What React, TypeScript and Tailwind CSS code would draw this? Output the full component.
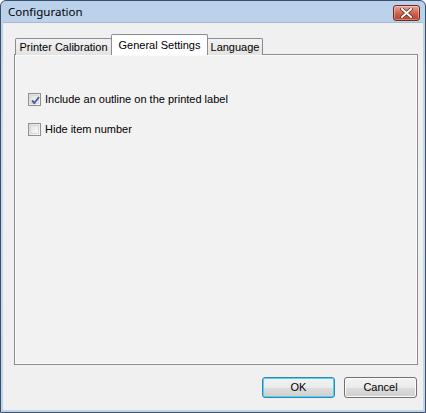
import React from "react";

function CheckBox({ checked }: { checked?: boolean }) {
  return (
    <span className="relative flex h-[13px] w-[13px] shrink-0 items-center justify-center border border-[#8f8f8f] bg-gradient-to-br from-[#dcdcdc] to-[#fbfbfb]">
      <span className="h-[9px] w-[9px] border border-[#d6d6d6] bg-gradient-to-br from-[#e4e4e4] to-[#fafafa]" />
      {checked && (
        <svg className="absolute left-[1px] top-[1px]" width="11" height="11" viewBox="0 0 11 11">
          <path d="M2 5.5 L4.3 8 L9 2" fill="none" stroke="#4a5f97" strokeWidth="1.9" />
        </svg>
      )}
    </span>
  );
}

function Button({ label, focused }: { label: string; focused?: boolean }) {
  return (
    <button
      type="button"
      className={
        "h-[21px] w-[73px] rounded-[3px] border text-[11px] text-black " +
        (focused
          ? "border-[#3c7fb1] shadow-[inset_0_0_0_1px_#48d8fb]"
          : "border-[#707070] shadow-[inset_0_0_0_1px_#fcfcfc]")
      }
      style={{ background: "linear-gradient(#f2f2f2 0%, #ebebeb 50%, #dddddd 51%, #cfcfcf 100%)" }}
    >
      {label}
    </button>
  );
}

export default function App() {
  const tabs = ["Printer Calibration", "General Settings", "Language"];
  const active = 1;

  return (
    <div
      className="flex h-[413px] w-[426px] flex-col overflow-hidden rounded-t-[6px] border border-[#3d4e68] bg-gradient-to-b from-[#b9d1ea] via-[#c9dbef] to-[#bcd4ec] text-[11px]"
      style={{ fontFamily: '"Liberation Sans", Arial, sans-serif' }}
    >
      {/* Title bar */}
      <div className="flex h-[21px] shrink-0 items-center justify-between pl-[7px] pr-[5px]">
        <span className="text-[11.5px] text-black" style={{ fontFamily: '"Noto Sans", sans-serif' }}>
          Configuration
        </span>
        <span className="mt-[2px] flex h-[16px] w-[27px] items-center justify-center rounded-[3px] border border-[#6b2a22] bg-gradient-to-b from-[#e9a898] via-[#d0654f] to-[#b8402c] shadow-[inset_0_0_0_1px_rgba(255,255,255,0.35)]">
          <svg width="13" height="10" viewBox="0 0 13 10">
            <path d="M2 1 L11 9 M11 1 L2 9" stroke="#5a2a22" strokeWidth="3.4" strokeLinecap="square" />
            <path d="M2 1 L11 9 M11 1 L2 9" stroke="#ffffff" strokeWidth="2" strokeLinecap="square" />
          </svg>
        </span>
      </div>

      {/* Client area */}
      <div className="relative mx-[2px] mb-[2px] flex flex-1 flex-col border-t border-[#a9b8ca] bg-[#f0f0f0] pl-[11px] pt-[11px]">
        {/* Tab strip */}
        <div className="relative z-10 -mb-px flex h-[21px] items-end pl-[1px]">
          {tabs.map((t, i) =>
            i === active ? (
              <div
                key={t}
                className="relative z-10 -mx-[1px] flex h-[21px] w-[97px] items-start justify-center rounded-t-[2px] border border-b-0 border-[#898c95] bg-white pt-[2px] text-black"
              >
                {t}
              </div>
            ) : (
              <div
                key={t}
                className={
                  "flex h-[17px] items-center justify-center rounded-t-[2px] border border-b-0 border-[#898c95] bg-gradient-to-b from-[#f2f2f2] to-[#e3e3e3] text-black " +
                  (i === 0 ? "w-[97px]" : "w-[56px]")
                }
              >
                {t}
              </div>
            )
          )}
        </div>

        {/* Panel */}
        <div className="h-[311px] w-[404px] border border-[#898c95] bg-[#f2f2f2] shadow-[inset_0_0_0_1px_#fafafa]">
          <div className="flex flex-col gap-[16px] pl-[13px] pt-[37px]">
            <label className="flex h-[14px] items-center gap-[4px] leading-[14px] text-black">
              <CheckBox checked />
              <span>Include an outline on the printed label</span>
            </label>
            <label className="flex h-[14px] items-center gap-[4px] leading-[14px] text-black">
              <CheckBox />
              <span>Hide item number</span>
            </label>
          </div>
        </div>

        {/* Buttons */}
        <div className="mt-[12px] flex w-[404px] justify-end gap-[9px] pr-[1px]">
          <Button label="OK" focused />
          <Button label="Cancel" />
        </div>
      </div>
    </div>
  );
}
